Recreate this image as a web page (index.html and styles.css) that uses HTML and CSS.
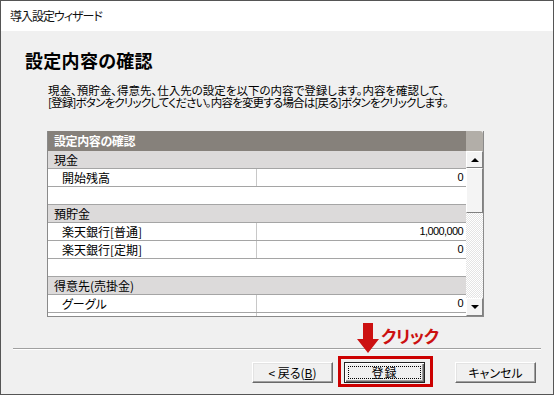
FILE: index.html
```html
<!DOCTYPE html>
<html lang="ja">
<head>
<meta charset="utf-8">
<title>導入設定ウィザード</title>
<link rel="stylesheet" href="styles.css">
</head>
<body>
<div class="window">
  <div class="titlebar">導入設定ウィザード</div>
  <div class="content">
    <h1 class="heading">設定内容の確認</h1>
    <p class="desc"><span class="line l1">現金、預貯金、得意先、仕入先の設定を以下の内容で登録します。内容を確認して、</span><span class="line l2">[登録]ボタンをクリックしてください。内容を変更する場合は[戻る]ボタンをクリックします。</span></p>
    <div class="panel">
      <div class="list">
        <div class="list-head">設定内容の確認</div>
        <div class="rows">
          <div class="row group">現金</div>
          <div class="row item"><span class="label">開始残高</span><span class="value">0</span></div>
          <div class="row empty"></div>
          <div class="row group">預貯金</div>
          <div class="row item"><span class="label">楽天銀行[普通]</span><span class="value">1,000,000</span></div>
          <div class="row item"><span class="label">楽天銀行[定期]</span><span class="value">0</span></div>
          <div class="row empty"></div>
          <div class="row group">得意先(売掛金)</div>
          <div class="row item"><span class="label">グーグル</span><span class="value">0</span></div>
          <div class="row item"><span class="label"></span><span class="value"></span></div>
        </div>
      </div>
      <div class="scrollbar">
        <div class="sb-corner"></div>
        <div class="sb-btn"><span class="tri up"></span></div>
        <div class="sb-thumb"></div>
        <div class="sb-track"></div>
        <div class="sb-btn"><span class="tri down"></span></div>
      </div>
    </div>
    <div class="separator"></div>
    <div class="footer">
      <button class="btn">&lt; 戻る(<u>B</u>)</button>
      <div class="highlight"><button class="btn default"><span class="focus">登録</span></button></div>
      <button class="btn cancel">キャンセル</button>
    </div>
  </div>
  <div class="annotation">
    <svg class="arrow" width="22" height="30" viewBox="0 0 22 30"><polygon points="6,0 16,0 16,16 22,16 11,30 0,16 6,16" fill="#cc1111"/></svg>
    <span class="click">クリック</span>
  </div>
</div>
</body>
</html>
```
FILE: styles.css
```css
* { box-sizing: border-box; }
html, body { margin: 0; padding: 0; background: #fff; }
body {
  font-family: "Noto Sans CJK JP", "Noto Sans", sans-serif;
  font-size: 12px;
  color: #000;
  font-feature-settings: "palt";
}
.window {
  position: relative;
  width: 554px;
  height: 395px;
  border: 1px solid #555;
  display: flex;
  flex-direction: column;
  background: #f0f0f0;
}
.titlebar {
  height: 30px;
  line-height: 30px;
  background: #fff;
  padding-left: 9px;
  font-size: 12px;
  letter-spacing: -1px;
  color: #111;
}
.content {
  flex: 1;
  background: #f0f0f0;
  display: flex;
  flex-direction: column;
}
.heading {
  margin: 19px 0 0 24px;
  font-size: 18px;
  line-height: 20px;
  font-weight: bold;
  letter-spacing: 0.3px;
}
.desc {
  margin: 14px 0 0 47px;
  font-size: 11.5px;
  line-height: 12px;
}
.line {
  display: block;
  height: 12px;
  white-space: nowrap;
}
.l1 { letter-spacing: 0px; }
.l2 { letter-spacing: -0.8px; }
.panel {
  margin: 23px 0 0 46px;
  width: 437px;
  height: 186px;
  display: flex;
  border-left: 1px solid #8a8a8a;
  border-bottom: 1px solid #8a8a8a;
}
.list {
  flex: 1;
  display: flex;
  flex-direction: column;
  overflow: hidden;
  background: #fff;
}
.list-head {
  height: 20px;
  line-height: 20px;
  background: #86817b;
  color: #fff;
  font-weight: bold;
  padding-left: 6px;
  letter-spacing: -0.4px;
}
.rows { flex: 1; overflow: hidden; }
.row {
  height: 18px;
  line-height: 17px;
  border-bottom: 1px solid #a5a5a5;
  display: flex;
}
.group {
  background: #dcdada;
  padding-left: 6px;
}
.empty { background: #fff; }
.item { background: #fff; }
.label {
  width: 209px;
  padding-left: 14px;
  border-right: 1px solid #c8c8c8;
}
.value {
  flex: 1;
  text-align: right;
  padding-right: 3px;
  font-family: "Liberation Sans", sans-serif;
  font-size: 11px;
  letter-spacing: -0.6px;
}
.scrollbar {
  width: 18px;
  display: flex;
  flex-direction: column;
  border-right: 1px solid #8a8a8a;
}
.sb-corner {
  height: 20px;
  background: #b2aea8;
  border-top-right-radius: 3px;
}
.sb-btn {
  height: 17px;
  background: #f4f4f4;
  border: 1px solid;
  border-color: #fff #808080 #808080 #fff;
  display: flex;
  align-items: center;
  justify-content: center;
}
.sb-btn:last-child { height: 18px; }
.tri { width: 0; height: 0; border-left: 4px solid transparent; border-right: 4px solid transparent; }
.tri.up { border-bottom: 4px solid #000; }
.tri.down { border-top: 4px solid #000; }
.sb-thumb {
  height: 45px;
  background: #f4f4f4;
  border: 1px solid;
  border-color: #fff #808080 #808080 #fff;
}
.sb-track {
  flex: 1;
  background: repeating-conic-gradient(#ffffff 0 25%, #e4e4e4 0 50%) 0 0 / 2px 2px;
}
.separator {
  margin: 31px 0 0 12px;
  width: 528px;
  height: 2px;
  border-top: 1px solid #a0a0a0;
  border-bottom: 1px solid #fff;
}
.footer {
  margin-top: 6px;
  display: flex;
  align-items: flex-start;
  padding-left: 251px;
}
.btn {
  width: 81px;
  height: 21px;
  margin-top: 6px;
  padding: 0;
  font-family: "Noto Sans CJK JP", sans-serif;
  font-size: 12px;
  line-height: 17px;
  color: #000;
  background: #f0f0f0;
  border: 1px solid;
  border-color: #fff #696969 #696969 #fff;
  box-shadow: inset -1px -1px 0 #a0a0a0, inset 1px 1px 0 #e3e3e3;
  font-feature-settings: "palt";
}
.btn u { text-decoration: underline; }
.highlight {
  margin-left: 5px;
  width: 95px;
  height: 31px;
  border: 3px solid #cc0000;
  padding: 0 0 0 3px;
}
.highlight .btn { margin-top: 3px; }
.btn.default {
  border: 1px solid #222;
  box-shadow: inset 1px 1px 0 #fff, inset -1px -1px 0 #696969, inset -2px -2px 0 #a0a0a0;
  display: flex;
  padding: 3px;
}
.focus {
  flex: 1;
  border: 1px dotted #000;
  line-height: 11px;
  letter-spacing: 1px;
}
.btn.cancel { margin-left: 22px; }
.annotation {
  position: absolute;
  left: 356px;
  top: 322px;
  display: flex;
  align-items: flex-start;
}
.arrow { display: block; }
.click {
  margin-left: 2px;
  margin-top: 2px;
  color: #cc1111;
  font-size: 17px;
  line-height: 22px;
  font-weight: bold;
  letter-spacing: -0.5px;
}
```
